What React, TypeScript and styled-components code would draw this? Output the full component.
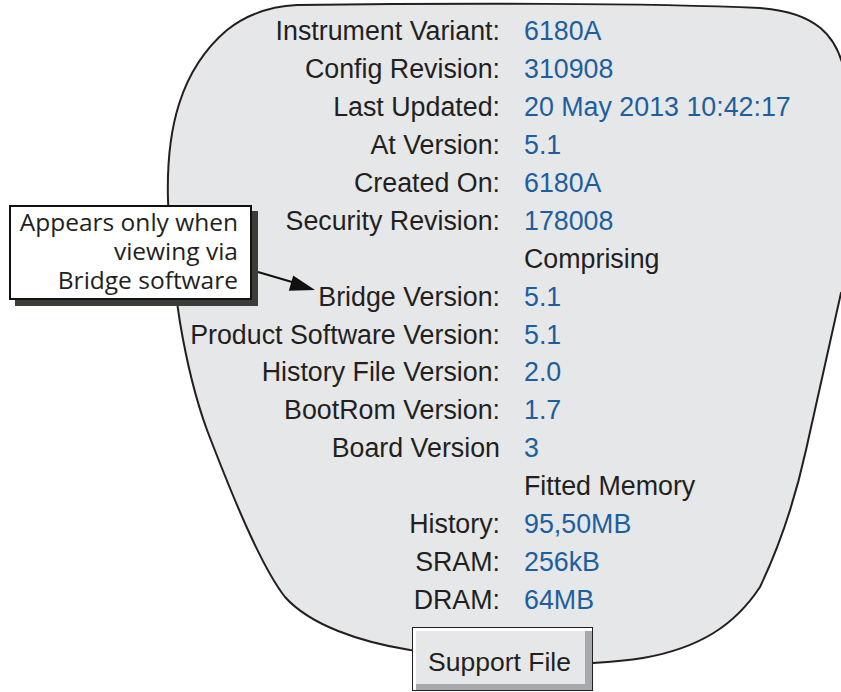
import React from "react";
import styled, { createGlobalStyle } from "styled-components";

const GlobalStyle = createGlobalStyle`
  html, body { margin: 0; padding: 0; background: #ffffff; }
  #root { width: 841px; height: 692px; }
`;

const Figure = styled.div`
  position: relative;
  width: 841px;
  height: 692px;
  overflow: hidden;
  background: #ffffff;
  font-family: "Liberation Sans", Arial, Helvetica, sans-serif;
`;

const BlobShape = styled.svg`
  position: absolute;
  left: 0;
  top: 0;
  width: 841px;
  height: 692px;
  z-index: 0;
`;

const Panel = styled.div`
  position: relative;
  z-index: 1;
  display: flex;
  flex-direction: column;
  padding-top: 13px;
`;

const InfoGrid = styled.div`
  display: grid;
  grid-template-columns: 500px auto;
  grid-auto-rows: 37.9px;
  column-gap: 24px;
  align-items: center;
  font-size: 26.8px;
`;

const Label = styled.div`
  text-align: right;
  white-space: nowrap;
  color: #231f20;
`;

const Value = styled.div<{ $heading?: boolean }>`
  white-space: nowrap;
  color: ${(p) => (p.$heading ? "#231f20" : "#1d5f9e")};
`;

const SupportButton = styled.button`
  box-sizing: border-box;
  margin: 8px 0 0 412px;
  width: 181px;
  height: 64px;
  padding: 6px 6px 0 0;
  border: 1px solid #231f20;
  background: #e6e7e8;
  box-shadow: inset 3px 3px 0 #ffffff, inset -7px -6px 0 #a7a9ac;
  font-family: "Liberation Sans", Arial, Helvetica, sans-serif;
  font-size: 26.5px;
  color: #231f20;
  text-align: center;
  cursor: pointer;
`;

const Callout = styled.div`
  position: absolute;
  z-index: 2;
  left: 9px;
  top: 205px;
  box-sizing: border-box;
  width: 243px;
  height: 95px;
  padding: 0 12px 0 0;
  border: 2px solid #111111;
  background: #ffffff;
  box-shadow: 6px 6px 0 #3b3d39;
  font-family: "Open Sans", "Noto Sans", sans-serif;
  font-size: 24.5px;
  line-height: 29px;
  color: #231f20;
  text-align: right;
`;

const CalloutArrow = styled.svg`
  position: absolute;
  z-index: 2;
  left: 0;
  top: 0;
  width: 841px;
  height: 692px;
  pointer-events: none;
`;

type Row = { label: string; value: string; heading?: boolean };

const rows: Row[] = [
  { label: "Instrument Variant:", value: "6180A" },
  { label: "Config Revision:", value: "310908" },
  { label: "Last Updated:", value: "20 May 2013 10:42:17" },
  { label: "At Version:", value: "5.1" },
  { label: "Created On:", value: "6180A" },
  { label: "Security Revision:", value: "178008" },
  { label: "", value: "Comprising", heading: true },
  { label: "Bridge Version:", value: "5.1" },
  { label: "Product Software Version:", value: "5.1" },
  { label: "History File Version:", value: "2.0" },
  { label: "BootRom Version:", value: "1.7" },
  { label: "Board Version", value: "3" },
  { label: "", value: "Fitted Memory", heading: true },
  { label: "History:", value: "95,50MB" },
  { label: "SRAM:", value: "256kB" },
  { label: "DRAM:", value: "64MB" },
];

const blobPath =
  "M 297 5 C 450 3, 650 3, 760 8 C 815 12, 838 35, 845 75 C 885 150, 885 240, 841 293 " +
  "L 806 450 C 795 500, 780 545, 760 587 C 735 625, 700 648, 643 658 C 625 661, 610 662, 593 663 " +
  "L 410 650 C 360 642, 310 625, 285 597 C 260 565, 230 490, 207 430 C 185 370, 170 280, 168 200 " +
  "C 166 130, 180 70, 227 30 C 250 12, 275 6, 297 5 Z";

export default function App() {
  return (
    <>
      <GlobalStyle />
      <Figure>
        <BlobShape viewBox="0 0 841 692">
          <path d={blobPath} fill="#e6e7e8" stroke="#231f20" strokeWidth={2} />
        </BlobShape>
        <Panel>
          <InfoGrid>
            {rows.map((r, i) => (
              <React.Fragment key={i}>
                <Label>{r.label}</Label>
                <Value $heading={r.heading}>{r.value}</Value>
              </React.Fragment>
            ))}
          </InfoGrid>
          <SupportButton>Support File</SupportButton>
        </Panel>
        <Callout>
          Appears only when
          <br />
          viewing via
          <br />
          Bridge software
        </Callout>
        <CalloutArrow viewBox="0 0 841 692">
          <line x1={258} y1={272} x2={292} y2={282} stroke="#111" strokeWidth={2} />
          <polygon points="315,290 288.8,290.8 293.2,275.4" fill="#111" />
        </CalloutArrow>
      </Figure>
    </>
  );
}
